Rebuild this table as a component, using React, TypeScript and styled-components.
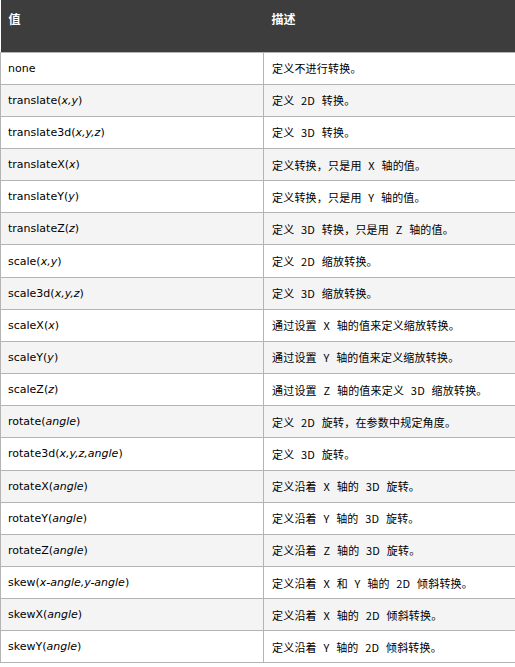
import styled, { createGlobalStyle } from 'styled-components'

const GlobalStyle = createGlobalStyle`
  html, body {
    margin: 0;
    padding: 0;
    background: #ffffff;
    overflow: hidden;
  }
`

const Table = styled.table`
  width: 516px;
  border-collapse: collapse;
  table-layout: fixed;
  font-family: "DejaVu Sans", Verdana, "Noto Sans CJK SC", sans-serif;
  font-size: 11px;
  color: #000;
`

const HeadCell = styled.th`
  height: 52px;
  padding: 10px 7px 0 8px;
  background: #3d3d3d;
  color: #ffffff;
  font-family: "Noto Sans CJK SC", sans-serif;
  font-size: 12px;
  font-weight: bold;
  text-align: left;
  vertical-align: top;
  box-sizing: border-box;
`

const Row = styled.tr<{ $alt: boolean }>`
  background: ${({ $alt }) => ($alt ? '#f4f4f4' : '#ffffff')};
`

const Cell = styled.td`
  height: 32.17px;
  padding: 0 7px;
  border: 1px solid #b4b4b4;
  box-sizing: border-box;
  vertical-align: middle;
  white-space: nowrap;
`

const DescCell = styled(Cell)`
  padding-left: 8px;
  font-family: "Noto Sans CJK SC", sans-serif;
  font-size: 11px;
  letter-spacing: 0.2px;
  word-spacing: 4px;
`

type Item = { name: string; args?: string; desc: string }

const items: Item[] = [
  { name: 'none', desc: '定义不进行转换。' },
  { name: 'translate', args: 'x,y', desc: '定义 2D 转换。' },
  { name: 'translate3d', args: 'x,y,z', desc: '定义 3D 转换。' },
  { name: 'translateX', args: 'x', desc: '定义转换，只是用 X 轴的值。' },
  { name: 'translateY', args: 'y', desc: '定义转换，只是用 Y 轴的值。' },
  { name: 'translateZ', args: 'z', desc: '定义 3D 转换，只是用 Z 轴的值。' },
  { name: 'scale', args: 'x,y', desc: '定义 2D 缩放转换。' },
  { name: 'scale3d', args: 'x,y,z', desc: '定义 3D 缩放转换。' },
  { name: 'scaleX', args: 'x', desc: '通过设置 X 轴的值来定义缩放转换。' },
  { name: 'scaleY', args: 'y', desc: '通过设置 Y 轴的值来定义缩放转换。' },
  { name: 'scaleZ', args: 'z', desc: '通过设置 Z 轴的值来定义 3D 缩放转换。' },
  { name: 'rotate', args: 'angle', desc: '定义 2D 旋转，在参数中规定角度。' },
  { name: 'rotate3d', args: 'x,y,z,angle', desc: '定义 3D 旋转。' },
  { name: 'rotateX', args: 'angle', desc: '定义沿着 X 轴的 3D 旋转。' },
  { name: 'rotateY', args: 'angle', desc: '定义沿着 Y 轴的 3D 旋转。' },
  { name: 'rotateZ', args: 'angle', desc: '定义沿着 Z 轴的 3D 旋转。' },
  { name: 'skew', args: 'x-angle,y-angle', desc: '定义沿着 X 和 Y 轴的 2D 倾斜转换。' },
  { name: 'skewX', args: 'angle', desc: '定义沿着 X 轴的 2D 倾斜转换。' },
  { name: 'skewY', args: 'angle', desc: '定义沿着 Y 轴的 2D 倾斜转换。' },
]

export default function App() {
  return (
    <>
      <GlobalStyle />
      <Table>
        <colgroup>
          <col style={{ width: 263 }} />
          <col />
        </colgroup>
        <thead>
          <tr>
            <HeadCell>值</HeadCell>
            <HeadCell>描述</HeadCell>
          </tr>
        </thead>
        <tbody>
          {items.map(({ name, args, desc }, i) => (
            <Row key={name} $alt={i % 2 === 1}>
              <Cell>
                {name}
                {args !== undefined && (
                  <>
                    (<i>{args}</i>)
                  </>
                )}
              </Cell>
              <DescCell>{desc}</DescCell>
            </Row>
          ))}
        </tbody>
      </Table>
    </>
  )
}
